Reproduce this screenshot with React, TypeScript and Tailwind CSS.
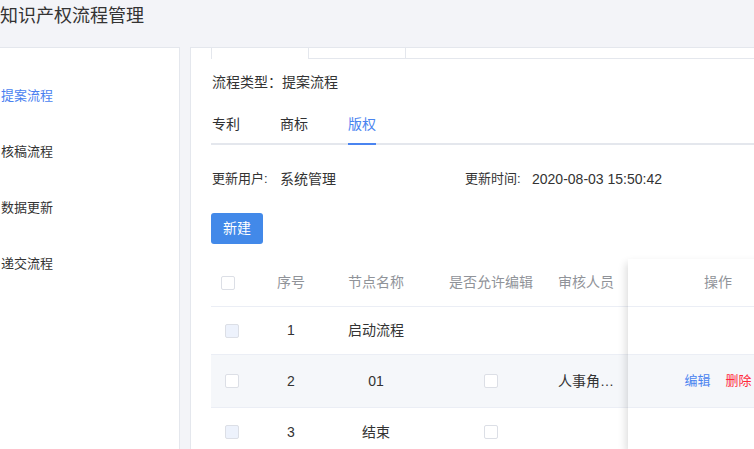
import React from "react";

const font = "font-['Liberation_Sans','Noto_Sans_CJK_SC',sans-serif]";

const Box = ({ disabled = false }: { disabled?: boolean }) => (
  <span
    className={`inline-block w-[14px] h-[14px] rounded-[2px] border border-[#dcdfe6] ${
      disabled ? "bg-[#edf2fc]" : "bg-white"
    }`}
  />
);

const menu = ["提案流程", "核稿流程", "数据更新", "递交流程"];
const tabs = ["专利", "商标", "版权"];

const rows = [
  { no: "1", name: "启动流程", edit: false, who: "", ops: false, h: "h-[47px]", hl: false, dis: true },
  { no: "2", name: "01", edit: true, who: "人事角色管理员", ops: true, h: "h-[52px]", hl: true, dis: false },
  { no: "3", name: "结束", edit: true, who: "", ops: false, h: "h-[48px]", hl: false, dis: true },
];

export default function App() {
  return (
    <div className={`w-[754px] h-[449px] overflow-hidden bg-[#f3f4f8] text-[#333] ${font}`}>
      {/* page title */}
      <div className="h-[47px] pt-[4px] text-[18px] leading-[24px] text-[#333]">知识产权流程管理</div>

      <div className="flex gap-[10px] h-[402px]">
        {/* side menu */}
        <aside className="w-[180px] shrink-0 bg-white border-t border-r border-[#e4e7ed] pt-[20px]">
          {menu.map((m, i) => (
            <div
              key={m}
              className={`h-[56px] flex items-center pl-px text-[13px] ${i === 0 ? "text-[#4a7ff0]" : "text-[#333]"}`}
            >
              {m}
            </div>
          ))}
        </aside>

        {/* main card */}
        <main className="flex-1 min-w-0 bg-white border-t border-l border-[#e4e7ed] overflow-hidden">
          {/* cut-off card tabs */}
          <div className="flex h-[11px]">
            <div className="w-[20px] shrink-0" />
            <div className="w-[98px] shrink-0 border-l border-r border-[#e4e7ed]" />
            <div className="w-[97px] shrink-0 border-r border-b border-[#e4e7ed]" />
            <div className="flex-1 border-b border-[#e4e7ed]" />
          </div>

          <div className="pl-[20px]">
            <div className="mt-[13px] h-[20px] leading-[20px] text-[14px] pl-px">流程类型：提案流程</div>

            {/* type tabs */}
            <div className="mt-[13px] h-[40px] flex border-b-2 border-[#e4e7ed] pl-px">
              {tabs.map((t, i) => (
                <div
                  key={t}
                  className={`relative h-full flex items-center text-[14px] ${i === 0 ? "pr-[20px]" : "px-[20px]"} ${
                    i === 2 ? "text-[#4a84f0]" : "text-[#303133]"
                  }`}
                >
                  {t}
                  {i === 2 && <span className="absolute left-[20px] right-[20px] -bottom-[2px] h-[2px] bg-[#4a84f0]" />}
                </div>
              ))}
            </div>

            {/* meta */}
            <div className="mt-[24px] h-[20px] flex items-center pl-px">
              <div className="w-[253px] flex items-center">
                <span className="w-[68px] text-[13px]">更新用户:</span>
                <span className="text-[14px]">系统管理</span>
              </div>
              <div className="flex items-center">
                <span className="w-[67px] text-[13px]">更新时间:</span>
                <span className="text-[14px]">2020-08-03 15:50:42</span>
              </div>
            </div>

            <button className="mt-[24px] w-[52px] h-[31px] rounded-[3px] bg-[#4289e9] text-white text-[14px]">新建</button>

            {/* table */}
            <div className="mt-[15px] flex w-[597px]">
              <div className="w-[417px] shrink-0 text-[14px]">
                <div className="h-[48px] flex border-b border-[#ebeef5] text-[#909399]">
                  <div className="w-[40px] flex items-center pl-[10px]">
                    <Box />
                  </div>
                  <div className="w-[80px] flex items-center justify-center">序号</div>
                  <div className="w-[90px] flex items-center justify-center">节点名称</div>
                  <div className="w-[136px] pl-[4px] flex items-center justify-center whitespace-nowrap">是否允许编辑</div>
                  <div className="w-[71px] flex items-center pl-px whitespace-nowrap">审核人员</div>
                </div>
                {rows.map((r) => (
                  <div
                    key={r.no}
                    className={`${r.h} box-content flex border-b border-[#ebeef5] ${r.hl ? "bg-[#f5f7fa]" : "bg-white"}`}
                  >
                    <div className="w-[40px] flex items-center pl-[14px]">
                      <Box disabled={r.dis} />
                    </div>
                    <div className="w-[80px] flex items-center justify-center">{r.no}</div>
                    <div className="w-[90px] flex items-center justify-center">{r.name}</div>
                    <div className="w-[136px] pl-[4px] flex items-center justify-center">{r.edit && <Box />}</div>
                    <div className="w-[71px] flex items-center pl-px">
                      {r.who && <span className="w-[56px] truncate">{r.who}</span>}
                    </div>
                  </div>
                ))}
              </div>

              {/* fixed action column */}
              <div className="relative z-10 w-[180px] shrink-0 bg-white text-[14px] shadow-[-6px_0_8px_-4px_rgba(0,0,0,0.14)]">
                <div className="h-[48px] flex items-center justify-center border-b border-[#ebeef5] text-[#909399]">操作</div>
                {rows.map((r) => (
                  <div
                    key={r.no}
                    className={`${r.h} box-content flex items-center justify-center gap-[15px] border-b border-[#ebeef5] ${
                      r.hl ? "bg-[#f5f7fa]" : "bg-white"
                    }`}
                  >
                    {r.ops && (
                      <>
                        <span className="text-[13px] text-[#4a84f0]">编辑</span>
                        <span className="text-[13px] text-[#ff2b3a]">删除</span>
                      </>
                    )}
                  </div>
                ))}
              </div>
            </div>
          </div>
        </main>
      </div>
    </div>
  );
}
